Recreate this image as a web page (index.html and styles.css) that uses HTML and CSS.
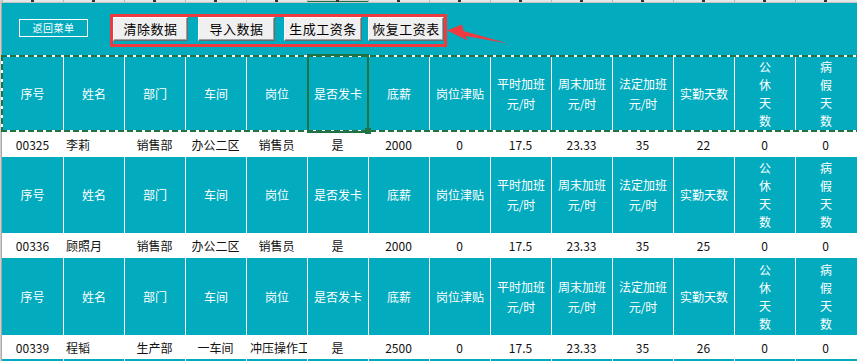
FILE: index.html
```html
<!DOCTYPE html>
<html lang="zh-CN">
<head>
<meta charset="utf-8">
<title>工资表</title>
<link rel="stylesheet" href="styles.css">
</head>
<body>
<div class="colhdr">
  <div class="corner"></div>
  <div class="ch"><i></i></div><div class="ch"><i></i></div><div class="ch"><i></i></div><div class="ch"><i></i></div><div class="ch"><i></i></div>
  <div class="ch on"><i></i></div><div class="ch"><i></i></div><div class="ch"><i></i></div><div class="ch"><i></i></div><div class="ch"><i></i></div>
  <div class="ch"><i></i></div><div class="ch"><i></i></div><div class="ch"><i></i></div><div class="ch"><i></i></div>
</div>
<div class="main">
  <div class="gutter"></div>
  <div class="sheet">
    <div class="toolbar">
      <div class="back">返回菜单</div>
      <div class="redbox">
        <button class="btn b1">清除数据</button>
        <button class="btn b2">导入数据</button>
        <button class="btn b3">生成工资条</button>
        <button class="btn b4">恢复工资表</button>
      </div>
    </div>

    <div class="row hdr h1 ants">
      <div class="c">序号</div><div class="c">姓名</div><div class="c">部门</div><div class="c">车间</div><div class="c">岗位</div>
      <div class="c sel">是否发卡</div><div class="c">底薪</div><div class="c">岗位津贴</div>
      <div class="c two">平时加班<br>元/时</div><div class="c two">周末加班<br>元/时</div><div class="c two">法定加班<br>元/时</div>
      <div class="c">实勤天数</div><div class="c vert">公<br>休<br>天<br>数</div><div class="c vert">病<br>假<br>天<br>数</div>
    </div>
    <div class="row data d1">
      <div class="c">00325</div><div class="c name">李莉</div><div class="c">销售部</div><div class="c">办公二区</div><div class="c">销售员</div>
      <div class="c">是</div><div class="c">2000</div><div class="c">0</div><div class="c">17.5</div><div class="c">23.33</div>
      <div class="c">35</div><div class="c">22</div><div class="c">0</div><div class="c">0</div>
    </div>

    <div class="row hdr h2">
      <div class="c">序号</div><div class="c">姓名</div><div class="c">部门</div><div class="c">车间</div><div class="c">岗位</div>
      <div class="c">是否发卡</div><div class="c">底薪</div><div class="c">岗位津贴</div>
      <div class="c two">平时加班<br>元/时</div><div class="c two">周末加班<br>元/时</div><div class="c two">法定加班<br>元/时</div>
      <div class="c">实勤天数</div><div class="c vert">公<br>休<br>天<br>数</div><div class="c vert">病<br>假<br>天<br>数</div>
    </div>
    <div class="row data d2">
      <div class="c">00336</div><div class="c name">顾照月</div><div class="c">销售部</div><div class="c">办公二区</div><div class="c">销售员</div>
      <div class="c">是</div><div class="c">2000</div><div class="c">0</div><div class="c">17.5</div><div class="c">23.33</div>
      <div class="c">35</div><div class="c">25</div><div class="c">0</div><div class="c">0</div>
    </div>

    <div class="row hdr h3">
      <div class="c">序号</div><div class="c">姓名</div><div class="c">部门</div><div class="c">车间</div><div class="c">岗位</div>
      <div class="c">是否发卡</div><div class="c">底薪</div><div class="c">岗位津贴</div>
      <div class="c two">平时加班<br>元/时</div><div class="c two">周末加班<br>元/时</div><div class="c two">法定加班<br>元/时</div>
      <div class="c">实勤天数</div><div class="c vert">公<br>休<br>天<br>数</div><div class="c vert">病<br>假<br>天<br>数</div>
    </div>
    <div class="row data d3">
      <div class="c">00339</div><div class="c name">程韬</div><div class="c">生产部</div><div class="c">一车间</div><div class="c clip">冲压操作工</div>
      <div class="c">是</div><div class="c">2500</div><div class="c">0</div><div class="c">17.5</div><div class="c">23.33</div>
      <div class="c">35</div><div class="c">26</div><div class="c">0</div><div class="c">0</div>
    </div>

    <div class="row hdr h4">
      <div class="c"></div><div class="c"></div><div class="c"></div><div class="c"></div><div class="c"></div>
      <div class="c"></div><div class="c"></div><div class="c"></div><div class="c"></div><div class="c"></div>
      <div class="c"></div><div class="c"></div><div class="c"></div><div class="c"></div>
    </div>
  </div>
</div>
<svg class="arrow" width="70" height="30" viewBox="440 20 70 30" aria-hidden="true">
  <polygon points="447,30.5 462,24.5 463.5,31 508,43.5 465.5,36 468,40.5" fill="#ef3a3f"/>
</svg>
</body>
</html>
```

FILE: styles.css
```css
* { box-sizing: border-box; }
html, body { margin: 0; padding: 0; }
body {
  width: 857px;
  height: 361px;
  overflow: hidden;
  background: #02abbe;
  font-family: "Noto Sans CJK SC", "Noto Sans", sans-serif;
  position: relative;
}

/* Excel column header strip */
.colhdr {
  display: grid;
  grid-template-columns: 2px repeat(14, 61px);
  height: 3px;
  background: #e6e6e6;
  border-bottom: 1px solid #c4c4c4;
  overflow: hidden;
}
.colhdr .corner { background: #d0d0d0; }
.colhdr .ch {
  border-left: 1px solid #b8b8b8;
  position: relative;
}
.colhdr .ch i {
  position: absolute;
  left: 28px;
  top: 0;
  width: 3px;
  height: 2px;
  background: #333;
}
.colhdr .ch.on { border-bottom: 1px solid #217346; background: #d2d2d2; }

.main {
  display: flex;
}
.gutter {
  width: 2px;
  flex: none;
  background: #cfcfcf;
  border-right: 1px solid #a8a8a8;
}
.sheet {
  width: 855px;
  flex: none;
}

/* toolbar area */
.toolbar {
  height: 52px;
  display: flex;
  align-items: flex-start;
  padding-left: 17px;
}
.back {
  margin-top: 16px;
  width: 69px;
  height: 18px;
  border: 1px solid #ffffff;
  color: #ffffff;
  font-size: 10px;
  line-height: 16px;
  text-align: center;
  letter-spacing: 0.5px;
}
.redbox {
  margin-top: 11px;
  margin-left: 22px;
  width: 337px;
  height: 33px;
  border: 3px solid #ef3a3f;
  display: flex;
  align-items: flex-start;
}
.btn {
  height: 24px;
  padding: 0;
  margin: 0;
  font-family: "Noto Sans CJK SC", sans-serif;
  font-size: 13px;
  line-height: 20px;
  color: #000;
  background: #f0f0f0;
  border: 1px solid;
  border-color: #ffffff #6b6b6b #6b6b6b #ffffff;
  box-shadow: inset -1px -1px 0 #a0a0a0;
  letter-spacing: 0.5px;
}
.b1 { width: 75px; }
.b2 { width: 77px; margin-left: 10px; }
.b3 { width: 78px; margin-left: 9px; }
.b4 { width: 76px; margin-left: 6px; }

/* table rows */
.row {
  display: grid;
  grid-template-columns: repeat(14, 61px);
  position: relative;
}
.h1 { height: 77px; }
.h2 { height: 76px; }
.h3 { height: 77px; }
.h4 { height: 10px; }
.data { height: 25px; background: #ffffff; }
.d3 { height: 24px; }

.c {
  display: flex;
  align-items: center;
  justify-content: center;
  text-align: center;
  font-size: 12px;
  white-space: nowrap;
  overflow: hidden;
}
.hdr .c {
  color: #ffffff;
  line-height: 20px;
}
.hdr .c + .c { border-left: 1px solid #ffffff; }
.hdr .c.vert { line-height: 18px; }
.data .c { color: #111; }
.data .c.name { justify-content: flex-start; padding-left: 3px; }
.data .c.clip { justify-content: flex-start; padding-left: 4px; }

/* marching ants around the first header row */
.ants::after {
  content: "";
  position: absolute;
  top: 0;
  bottom: 0;
  left: -1px;
  right: -12px;
  pointer-events: none;
  z-index: 1;
  background:
    repeating-linear-gradient(90deg, #207245 0 6px, #ffffff 6px 9px) left top / 100% 2px no-repeat,
    repeating-linear-gradient(90deg, #207245 0 6px, #ffffff 6px 9px) left bottom / 100% 2px no-repeat,
    repeating-linear-gradient(180deg, #207245 0 6px, #ffffff 6px 9px) left top / 2px 100% no-repeat;
}

/* selected cell */
.sel { position: relative; overflow: visible; }
.sel::after {
  content: "";
  position: absolute;
  top: -1px;
  left: -1px;
  right: -1px;
  bottom: -1px;
  border: 2px solid #217346;
  z-index: 2;
}
.sel::before {
  content: "";
  position: absolute;
  right: -3px;
  bottom: -2px;
  width: 6px;
  height: 6px;
  background: #217346;
  z-index: 3;
}

.arrow {
  position: absolute;
  left: 440px;
  top: 20px;
}
```
